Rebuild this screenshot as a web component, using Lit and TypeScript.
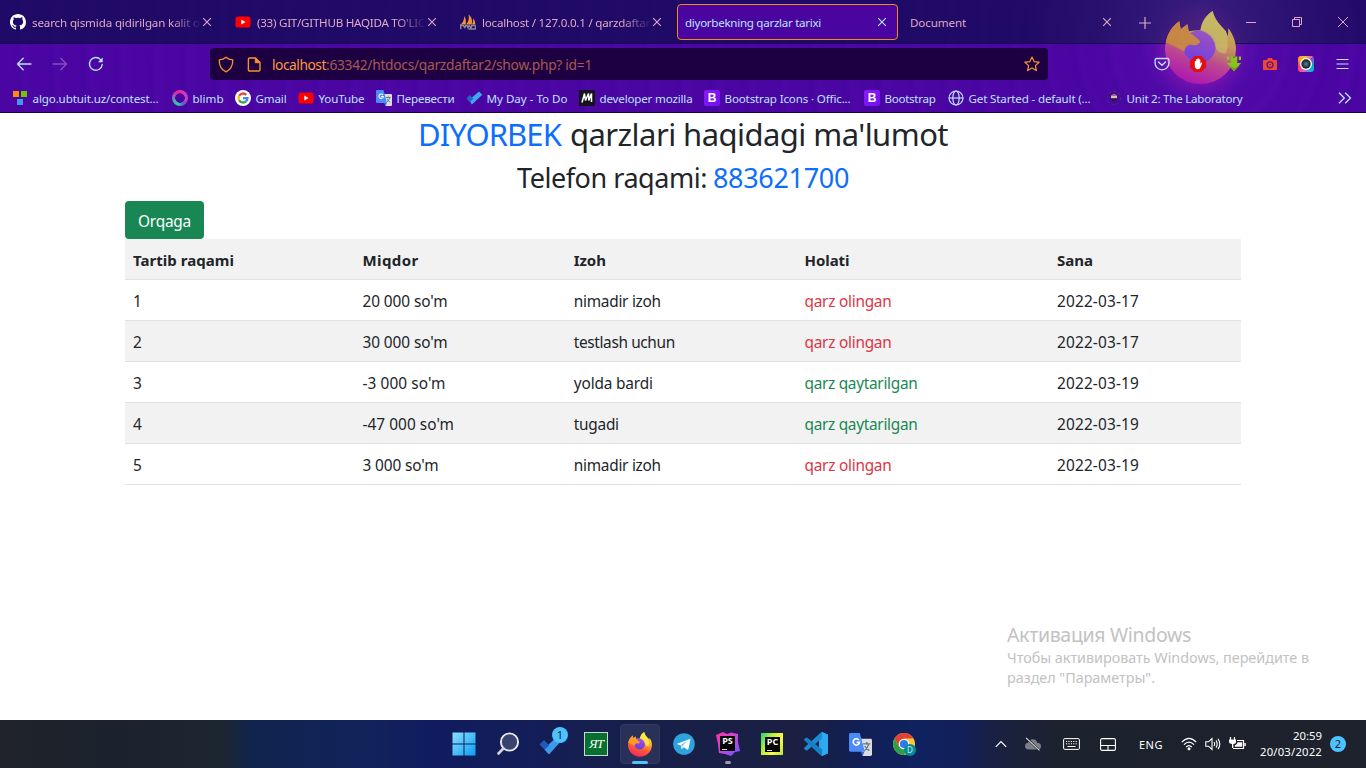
import { LitElement, html, css, svg, nothing } from "lit";
import { customElement, property } from "lit/decorators.js";
import { styleMap } from "lit/directives/style-map.js";

/** A single line of text whose tracking is adjusted so that it fills a given width. */
@customElement("fit-text")
class FitText extends LitElement {
  @property() text = "";
  @property({ type: Number }) w = 0;

  static styles = css`
    :host { display: inline-block; white-space: pre; text-align: left; }
    .line { display: inline-block; }
  `;

  firstUpdated() {
    const line = this.renderRoot.querySelector(".line") as HTMLElement;
    this.style.width = `${this.w}px`;
    const natural = line.getBoundingClientRect().width;
    line.style.letterSpacing = `${(this.w - natural) / this.text.length}px`;
  }

  render() {
    return html`<span class="line">${this.text}</span>`;
  }
}

const t = (text: string, w: number) => html`<fit-text .text=${text} .w=${w}></fit-text>`;

const icon = (w: number, h: number, body: unknown, box = `0 0 ${w} ${h}`) =>
  html`<svg class="icon" width=${w} height=${h} viewBox=${box} fill="none">${body}</svg>`;

const closeIcon = icon(10, 10, svg`<path d="M1.2 1.2l7.6 7.6M8.8 1.2L1.2 8.8" stroke="currentColor" stroke-width="1.1"/>`);

const github = icon(16, 16, svg`<path fill="#fff" d="M8 0C3.58 0 0 3.58 0 8c0 3.54 2.29 6.53 5.47 7.59.4.07.55-.17.55-.38 0-.19-.01-.82-.01-1.49-2.01.37-2.53-.49-2.69-.94-.09-.23-.48-.94-.82-1.13-.28-.15-.68-.52-.01-.53.63-.01 1.08.58 1.23.82.72 1.21 1.87.87 2.33.66.07-.52.28-.87.51-1.07-1.78-.2-3.64-.89-3.64-3.95 0-.87.31-1.59.82-2.15-.08-.2-.36-1.02.08-2.12 0 0 .67-.21 2.2.82.64-.18 1.32-.27 2-.27s1.36.09 2 .27c1.53-1.04 2.2-.82 2.2-.82.44 1.1.16 1.92.08 2.12.51.56.82 1.27.82 2.15 0 3.07-1.87 3.75-3.65 3.95.29.25.54.73.54 1.48 0 1.07-.01 1.93-.01 2.2 0 .21.15.46.55.38A8.01 8.01 0 0 0 16 8c0-4.42-3.58-8-8-8z"/>`);

const youtube = icon(16, 16, svg`<rect x=".5" y="2.4" width="15" height="11.2" rx="2.6" fill="#f00"/><path d="M6.3 5.6v4.8l4.2-2.4z" fill="#fff"/>`);

const phpmyadmin = icon(16, 16, svg`<path d="M1 10.500Q4 7.500 4.600 2Q6.500 6 5.900 10.500zM6.200 10.500Q9.800 6 8.600.2Q13.500 5 11.600 10.500zM11.900 10.500Q13.600 8 13.200 4.200Q15.900 7.500 15.400 10.500z" fill="#f59331"/><path d="M.8 15.2V11l2.600.5 1.400 2 .8-2 1.600.2.800 2 1.200-2.200 2 2.500.4-2.600h3.400l1 3.600H8.500" stroke="#8d8793" stroke-width="1.500"/>`);

const shield = icon(16, 17, svg`<path d="M8 1.2C6.2 2.8 3.6 3.6 1.2 3.8c0 5.2 1.8 10 6.8 12 5-2 6.8-6.8 6.8-12C12.400 3.600 9.800 2.800 8 1.200z" stroke="#f59332" stroke-width="1.3" stroke-linejoin="round"/>`);
const pageIcon = icon(14, 15, svg`<path d="M2.700 1h5.800l4.500 4.500v7.200q0 1.300-1.300 1.300H2.700q-1.300 0-1.300-1.300V2.300Q1.400 1 2.700 1z" stroke="#f59332" stroke-width="1.4"/><path d="M8.300 1v4.700H13z" fill="#f59332" stroke="#f59332"/>`);
const star = icon(16, 16, svg`<path d="M8 1l2.100 4.600 5 .6-3.700 3.400 1 5L8 12.100l-4.400 2.500 1-5L.9 6.200l5-.6z" stroke="#f59332" stroke-width="1.200" stroke-linejoin="round"/>`);

const back = icon(16, 14, svg`<path d="M15 7H1.500M7.200 1.300L1.500 7l5.700 5.700" stroke="#b9e4fb" stroke-width="1.300" stroke-linecap="round" stroke-linejoin="round"/>`);
const forward = icon(16, 14, svg`<path d="M1 7h13.500M8.800 1.300L14.500 7l-5.700 5.700" stroke="#8053c2" stroke-width="1.300" stroke-linecap="round" stroke-linejoin="round"/>`);
const reload = icon(16, 16, svg`<path d="M14.200 8.500A6.400 6.400 0 1 1 12.600 3.600" stroke="#b9e4fb" stroke-width="1.400" stroke-linecap="round"/><path d="M14.700 1.400v4.900H9.800z" fill="#b9e4fb"/>`);

const pocket = icon(16, 16, svg`<path d="M2.600 2.500h10.800q1.500 0 1.500 1.500v3.300a6.900 6.500 0 0 1-13.800 0V4q0-1.500 1.500-1.500z" stroke="#b9e4fb" stroke-width="1.300"/><path d="M4.500 6l3.500 3.300L11.500 6" stroke="#b9e4fb" stroke-width="1.400" stroke-linecap="round" stroke-linejoin="round"/>`);
const blocker = icon(16, 16, svg`<path d="M4.700 0h6.600L16 4.700v6.600L11.300 16H4.700L0 11.300V4.700z" fill="#e30d12"/><path d="M4.800 9.200V5.300q.8-.8 1.300 0V3.400q.8-1 1.400 0V2.800q.8-1 1.400 0v.8q.9-.8 1.400.2v4l1-1.300q1-.3.9.5l-1.600 4.100q-.7 2.200-2.700 2.200-3.100 0-3.100-4.100z" fill="#fff"/>`);
const download = icon(16, 16, svg`<path d="M4.700.5h6.600v6.600h3.900L8 15.300.8 7.100h3.900z" fill="#86c41c"/><path d="M1 .5h2.200v3.500H1zM12.800.5H15V4h-2.200z" fill="#8ccc22"/><path d="M7.300.5h1.400v1.500H7.300z" fill="#437825"/><path d="M3 10L8 15.300 13 10 8 12z" fill="#65a812"/>`);
const camera = icon(14, 14, svg`<path d="M1 3h3l1-2h4l1 2h3q1 0 1 1v8q0 1-1 1H1q-1 0-1-1V4q0-1 1-1z" fill="#ee4a32"/><circle cx="7" cy="7.800" r="3" stroke="#5b1488" stroke-width="1.300"/><circle cx="7" cy="7.800" r=".8" fill="#5b1488"/>`);
const lens = html`<span class="lens">${icon(16, 16, svg`<circle cx="8" cy="8" r="6" fill="#fff"/><circle cx="8" cy="8" r="4.700" fill="#172b3c"/><circle cx="8" cy="8" r="3" fill="#33505f"/><circle cx="8" cy="8" r="1.800" fill="#5a6872"/>`)}</span>`;
const menu = icon(13, 12, svg`<path d="M.5 1.500h12M.5 6h12M.5 10.500h12" stroke="#b9e4fb" stroke-width="1.200"/>`);

const algo = icon(16, 16, svg`<path d="M1 1h6v6H1z" fill="#ff8c00"/><path d="M9 1h6v6H9z" fill="#6fc400"/><path d="M5 9h6v6H5z" fill="#4596f2"/>`);
const blimb = html`<span class="ring"></span>`;
const google = icon(16, 16, svg`<circle cx="8" cy="8" r="8" fill="#fff"/><g stroke-width="2.300"><path d="M4.100 5.800A4.500 4.500 0 0 1 11.300 4.900" stroke="#ea4335"/><path d="M4.100 10.200a4.500 4.500 0 0 1 0-4.400" stroke="#fbbc05"/><path d="M11 11.400a4.500 4.500 0 0 1-6.900-1.200" stroke="#34a853"/><path d="M8 8.100h4.500A4.500 4.500 0 0 1 11 11.400" stroke="#4285f4"/></g>`);
const translate = (s: number) => icon(s, s, svg`<path d="M7 4h8q1 0 1 1v10q0 1-1 1H9.500z" fill="#dadce0"/><path d="M9.800 7.500h5M12.300 6.300v1.200M13.700 7.700q-1 3.200-3 4.600M11 9q1 2 3.200 3.300" stroke="#607988" stroke-width=".9"/><path d="M8 13l2.700 0L9.500 16z" fill="#3367d6"/><path d="M1 0h6.500L11 13H1q-1 0-1-1V1q0-1 1-1z" fill="#4c8bf5"/><path d="M6.900 4.900A2.200 2.200 0 1 0 7.300 6.500H5.300" stroke="#fff" stroke-width="1.100"/>`, "0 0 16 16");
const todo = icon(17, 14, svg`<path d="M5.200 12L2 8.700l3.300-1.600L13 .5 16.300 3.700 6.500 13.100q-.6.500-1.300-.1z" fill="#3fa7f0"/><path d="M.5 7.300L3.800 4l3.500 3.500-3.300 3.400z" fill="#2467c4"/>`);
const mdn = icon(16, 16, svg`<path d="M0 0h16v16H0z" fill="#15141a"/><path d="M3 12.500L5.500 3.500l1 7 3-7 .3 7 2.700-7v8.500" stroke="#fff" stroke-width="1.500" stroke-linejoin="bevel"/>`);
const bootstrap = html`<span class="bs">B</span>`;
const globe = icon(16, 16, svg`<g stroke="#b9e4fb" stroke-width="1.200"><circle cx="8" cy="8" r="7"/><ellipse cx="8" cy="8" rx="3.200" ry="7"/><path d="M1 8h14"/></g>`);
const lab = icon(16, 16, svg`<circle cx="8" cy="8" r="6.600" stroke="#33317a" stroke-width="1.200" stroke-dasharray="3 2"/><path d="M4.500 6q3.500-4.500 7 0l-.5 1H5z" fill="#2b2d33"/><path d="M5 5.500h6v2.700H5z" fill="#d8c29b"/><path d="M6.500 4h3v1.700h-3z" fill="#c25ba0"/><path d="M4.800 8.700h6.400L9.500 11.500h-3z" fill="#251c4a"/>`);

/** The fox curled around its globe, shared by the theme art and the taskbar. */
const fox = (id: string, c: string[]) => svg`
  <defs>
    <linearGradient id=${id + "a"} x1=".75" y1="0" x2=".4" y2="1">
      <stop offset="0" stop-color=${c[0]}/><stop offset=".38" stop-color=${c[1]}/><stop offset=".68" stop-color=${c[2]}/><stop offset="1" stop-color=${c[3]}/>
    </linearGradient>
    <linearGradient id=${id + "b"} x1=".6" y1="0" x2=".3" y2="1"><stop offset="0" stop-color=${c[4]}/><stop offset="1" stop-color=${c[5]}/></linearGradient>
  </defs>
  <path fill="url(#${id}a)" d="M35 19C36 10 41 4 47 0C49 9 54 13 60 20L62 25L62.500 17C67 23 70 30 70 38A35 34 0 0 1 0 38C0 27 5 17 14 10L15.500 18L22 13L23 20Q29 19 35 19z"/>
  <circle cx="34" cy="35" r="16" fill="url(#${id}b)"/>
  <path fill=${c[6]} d="M1 31C2 22 7 15 14 10L15.500 18L22 13L24 21C28 24 33 27 35 31Q30 35 25 33Q20 34 19 40Q13 36 1 31z"/>
  <path fill=${c[0]} d="M35 19C36 10 41 4 47 0C49 9 54 13 60 20Q64 32 60 42Q52 42 50 36Q48 26 41 22Q38 20 35 19z" opacity=".75"/>`;

const themeFox = html`<svg class="theme-fox" width="71" height="73" viewBox="0 0 70 72">${fox("t", ["#cfc764", "#cda552", "#c04a90", "#b418b0", "#a257c8", "#6f43e0", "#d18f42"])}</svg>`;

const tabs = [
  { icon: github, title: "search qismida qidirilgan kalit o", w: 168 },
  { icon: youtube, title: "(33) GIT/GITHUB HAQIDA TO'LIC", w: 168 },
  { icon: phpmyadmin, title: "localhost / 127.0.0.1 / qarzdaftar", w: 168 },
  { icon: nothing, title: "diyorbekning qarzlar tarixi", w: 136, active: true },
  { icon: nothing, title: "Document", w: 56 },
];

const bookmarks: [unknown, string, number, number][] = [
  [algo, "algo.ubtuit.uz/contest...", 126, 160],
  [blimb, "blimb", 31, 63],
  [google, "Gmail", 31, 63],
  [youtube, "YouTube", 46, 78],
  [translate(16), "Перевести", 58, 90],
  [todo, "My Day - To Do", 81, 113],
  [mdn, "developer mozilla", 93, 125],
  [bootstrap, "Bootstrap Icons · Offic...", 126, 160],
  [bootstrap, "Bootstrap", 51, 84],
  [globe, "Get Started - default (...", 122, 158],
  [lab, "Unit 2: The Laboratory", 116, 150],
];

const headings: [string, number][] = [["Tartib raqami", 101], ["Miqdor", 56], ["Izoh", 32], ["Holati", 45], ["Sana", 36]];

const debts = [
  { n: "1", sum: "20 000 so'm", sw: 85, note: "nimadir izoh", nw: 87, paid: false, date: "2022-03-17" },
  { n: "2", sum: "30 000 so'm", sw: 85, note: "testlash uchun", nw: 101, paid: false, date: "2022-03-17" },
  { n: "3", sum: "-3 000 so'm", sw: 83, note: "yolda bardi", nw: 79, paid: true, date: "2022-03-19" },
  { n: "4", sum: "-47 000 so'm", sw: 91.500, note: "tugadi", nw: 45, paid: true, date: "2022-03-19" },
  { n: "5", sum: "3 000 so'm", sw: 76, note: "nimadir izoh", nw: 87, paid: false, date: "2022-03-19" },
];

const windowsLogo = icon(24, 24, svg`<defs><linearGradient id="wg" x1="0" y1="0" x2="1" y2="1"><stop offset="0" stop-color="#8be0ff"/><stop offset="1" stop-color="#0c9df5"/></linearGradient></defs><path fill="url(#wg)" d="M.5.5h11v11H.5zM12.500.5h11v11h-11zM.5 12.500h11v11H.5zM12.500 12.500h11v11h-11z"/>`);
const search = icon(24, 24, svg`<circle cx="13.500" cy="10" r="8.600" fill="#39436d" stroke="#e9e9ee" stroke-width="1.900"/><path d="M7.300 16.500L2.500 21.500" stroke="#d4d4d8" stroke-width="2.600" stroke-linecap="round"/>`);
const bigTodo = html`<span class="badged">${icon(26, 20, svg`<path d="M6 13L10.500 8.500 20 0 24.500 3.500 11.700 17.700q-.8.700-1.600 0z" fill="#3e97e8"/><path d="M1.500 8.500L6 4l5.200 5.200L6.700 13.700z" fill="#1c5bbd"/>`)}<b class="bubble">1</b></span>`;
const greenApp = html`<span class="green"><span>ЯТ</span></span>`;
const firefox = icon(24, 25, fox("f", ["#fff04a", "#ffb52b", "#ff5a35", "#f22b60", "#b04bf0", "#5d40d8", "#ff9a22"]), "0 0 70 73");
const telegram = icon(22, 22, svg`<circle cx="11" cy="11" r="10.800" fill="#2ba3dc"/><path d="M4.200 10.800L16.600 5.900q1-.2.800 1l-2 9.200q-.3 1-1.300.5l-3.300-2.400-1.700 1.600q-.5.300-.7-.4l-.8-3.200-3.200-1q-.9-.3-.2-.8z" fill="#fff"/><path d="M8.200 12.100l5.900-4.200-4.600 4.800-.4 2.300z" fill="#5ab3df"/>`);
const phpstorm = html`<span class="jb">${icon(24, 24, svg`<defs><linearGradient id="psg" x1="0" y1="0" x2="1" y2="1"><stop offset="0" stop-color="#ff2ea1"/><stop offset=".45" stop-color="#d543d8"/><stop offset=".8" stop-color="#8b50f5"/><stop offset="1" stop-color="#b457ff"/></linearGradient></defs><path d="M0 3l7-3 4 2 4-1.500 7 1.500v8l2 9-5 1-4 4-6-2-6-1-1-9z" fill="url(#psg)"/>`)}<b class="jb-text">PS</b></span>`;
const pycharm = html`<span class="jb pc"><b class="jb-text">PC</b></span>`;
const vscode = icon(24, 24, svg`<path d="M18 0l6 2.700v18.600L18 24l-3-2.500V2.500z" fill="#2aa5ee"/><path d="M15 6l-7.500 6 7.500 6z" fill="#111f50"/><path d="M18 0v6.500L3.300 18.300q-.8.500-1.500 0L.5 17q-.7-.8 0-1.500L16.500.7z" fill="#1a8ad2"/><path d="M18 24v-6.500L3.300 5.700q-.8-.5-1.500 0L.5 7q-.7.800 0 1.500L16.500 23.300z" fill="#1580c6"/><path d="M18 0l6 2.700v18.600L18 24z" fill="#2fa8f0"/>`);
const chrome = html`<span class="chrome-app">${icon(22, 22, svg`<circle cx="11" cy="11" r="11" fill="#fcc934"/><path d="M1.500 5.500A11 11 0 0 1 20.500 5.500H11L6.500 14z" fill="#e34133"/><path d="M1.500 5.500A11 11 0 0 0 11 22l4.800-8.200-9.600 0z" fill="#2c9f4b"/><circle cx="11" cy="11" r="5.300" fill="#fff"/><circle cx="11" cy="11" r="4.100" fill="#2f79ea"/>`)}<b class="profile">D</b></span>`;

const apps = [windowsLogo, search, bigTodo, greenApp, firefox, telegram, phpstorm, pycharm, vscode, translate(23), chrome];

@customElement("app-root")
class AppRoot extends LitElement {
  static styles = css`
    :host { display: flex; flex-direction: column; width: 1366px; height: 768px; overflow: hidden; background: #fff; font-family: "Noto Sans", "Open Sans", sans-serif; position: relative; }
    * { box-sizing: border-box; }
    .icon { display: block; flex: none; }

    .browser { flex: none; height: 113px; position: relative; border-bottom: 1px solid #16053e; font-size: 11.6px; color: #b9e4fb;
      background:
        repeating-radial-gradient(circle at 1200px 45px, rgba(125, 40, 230, 0) 0 12px, rgba(115, 30, 210, .09) 20px, rgba(40, 0, 120, .04) 27px, rgba(125, 40, 230, 0) 33px),
        radial-gradient(circle at 1200px 50px, rgba(170, 35, 190, .5) 30px, rgba(110, 30, 190, .18) 50px, rgba(110, 30, 190, 0) 120px),
        #4a05a2; }
    .theme-fox { position: absolute; left: 1165px; top: 11px; opacity: .93; }
    .strip { position: relative; display: flex; height: 44px; border-bottom: 1px solid #190450; background: linear-gradient(90deg, rgba(17, 11, 82, .74) 75%, rgba(38, 39, 96, .6) 88%, rgba(17, 11, 82, .7)); color: #dfa9c4; }
    .tab { flex: none; width: 221px; height: 36px; margin: 4px 2px 0; padding: 0 11px 0 8px; display: flex; align-items: center; border-radius: 4px; }
    .tab .icon { margin-right: 6px; }
    .tab .close { margin: 0 0 0 auto; }
    .tab .close .icon { margin: 0; }
    .tab .title { flex: 1; min-width: 0; display: flex; height: 20px; line-height: 20px; margin-top: 1px; }
    .tab.faded .title { -webkit-mask-image: linear-gradient(90deg, #000 82%, transparent); mask-image: linear-gradient(90deg, #000 82%, transparent); }
    .tab.active { border: 1px solid #f48a1d; background: #4a05a1; color: #b9e4fb; padding: 0 10px 0 7px; }
    .plus { margin: 17px 0 0 14px; }
    .caption { display: flex; gap: 34px; margin: 15px 0 0 94px; align-items: center; height: 14px; }

    .nav { position: relative; display: flex; align-items: center; height: 40px; padding-left: 16px; }
    .nav-buttons { display: flex; width: 194px; gap: 20px; align-items: center; }
    .url { display: flex; align-items: center; width: 838px; height: 32px; padding: 0 8px; border-radius: 4px; background: #1d0042; font-size: 13.800px; color: #a45a50; }
    .url .host { color: #f79b3d; }
    .url .page { margin: 0 11px 0 13px; }
    .url .star { margin-left: auto; }
    .tools { display: flex; margin-left: 96px; }
    .tool { width: 36px; height: 32px; display: flex; align-items: center; justify-content: center; }
    .lens { border-radius: 3px; background: conic-gradient(from 45deg, #a040d0, #00b0b8, #20aee8, #ee55cc, #ff3c50, #ff9a22, #f3c02b, #e05ac0); }

    .bookmarks { position: relative; display: flex; align-items: center; height: 28px; padding-left: 12px; }
    .mark { display: flex; align-items: center; flex: none; gap: 4.500px; }
    .mark-icon { width: 16px; display: flex; justify-content: center; }
    .ring { width: 16px; height: 16px; border-radius: 50%; background: radial-gradient(circle, #4904a1 0 4.500px, transparent 5px), conic-gradient(#e42fb4, #c23fd0 100deg, #6558c4 150deg, #30c5a8 190deg, #37bd9b 230deg, #9060c0 280deg, #f02092 330deg, #e42fb4); }
    .bs { width: 16px; height: 16px; border-radius: 2px; background: linear-gradient(135deg, #8f19fb, #6d10f0); color: #fff; font: 700 12px/16px "Liberation Sans", sans-serif; text-align: center; }
    .more { margin-left: 82px; }

    .page-body { flex: none; height: 607px; padding: 0 125px; color: #212529; font-size: 15.4px; line-height: 24px; }
    h2, h3 { margin: 0 0 8px; font-weight: 400; text-align: center; display: flex; justify-content: center; }
    h2 { font-size: 31px; line-height: 38.400px; height: 38.400px; gap: 9px; padding: 2px 0 0 0; }
    h3 { font-size: 27px; line-height: 33.600px; height: 33.600px; gap: 6px; padding-top: 2px; }
    .blue { color: #0d6efd; }
    .btn { display: flex; align-items: center; width: 79px; height: 38px; padding: 4px 0 0 13px; border: 0; border-radius: 4px; background: #198754; color: #fff; font: inherit; }
    .row { display: grid; grid-template-columns: 229.500px 211.300px 230.700px 252.500px 1fr; height: 41px; padding: 10px 8px 0; border-bottom: 1px solid #dee2e6; }
    .row.odd { background: #f2f2f2; }
    .row.head { padding-top: 9px; font-weight: 700; font-size: 15px; background: #f2f2f2; }
    .red { color: #dc3545; }
    .greenish { color: #198754; }

    .watermark { position: absolute; left: 1007px; top: 622px; color: #c2c2c2; display: flex; flex-direction: column; font-size: 14.400px; line-height: 20px; }
    .watermark .big { font-size: 19.500px; line-height: 26px; }

    .taskbar { flex: none; height: 48px; display: flex; align-items: center; color: #fff; font-size: 11.500px;
      background: linear-gradient(90deg, #20232b 0, #1b222d 120px, #1c2631 225px, #10244e 250px, #11235a 370px, #101c60 430px, #131d58 520px, #17204a 640px, #1b1f42 800px, #111f55 860px, #0f2260 920px, #12205a 960px, #1a2140 1000px, #1c222e 1060px, #1d222c 100%); }
    .apps { display: flex; gap: 4px; margin-left: 444px; }
    .app { width: 40px; height: 40px; display: flex; align-items: center; justify-content: center; position: relative; border-radius: 4px; }
    .app.current { background: rgba(255, 255, 255, .08); box-shadow: inset 0 0 0 1px rgba(255, 255, 255, .04); }
    .app.current::after { content: ""; position: absolute; left: 12px; bottom: 0; width: 16px; height: 3px; border-radius: 2px; background: #4cc2ff; }
    .app.running::after { content: ""; position: absolute; left: 17px; bottom: 0; width: 6px; height: 3px; border-radius: 2px; background: #9a9bab; }
    .badged, .chrome-app, .jb { position: relative; display: block; }
    .badged { margin: 3px 2px 0 0; }
    .bubble { position: absolute; left: 14px; top: -9px; width: 16px; height: 16px; border-radius: 50%; background: #4cc2ff; color: #111c40; font-weight: 400; font-size: 11px; line-height: 16px; text-align: center; }
    .green { width: 24px; height: 24px; border: 1px solid #c9d8d0; background: #08702e; font: italic 13px/22px "Liberation Serif", "DejaVu Serif", serif; text-align: center; letter-spacing: -1px; }
    .jb { width: 24px; height: 24px; }
    .jb-text { position: absolute; left: 4px; top: 4px; width: 15px; height: 15px; background: #050505; font: 700 9px/10px "Open Sans", sans-serif; text-align: center; }
    .jb-text::after { content: ""; position: absolute; left: 2px; bottom: 1px; width: 5px; height: 1.500px; background: #ddd; }
    .pc { width: 22px; height: 22px; background: linear-gradient(120deg, #1fd67c, #b9ee3a 35%, #fcf84a 65%, #b5e838); }
    .profile { position: absolute; left: 11px; top: 11px; width: 12px; height: 12px; border-radius: 50%; background: #078a91; color: #c9e7e9; font-weight: 400; font-size: 8px; line-height: 12px; text-align: center; }
    .tray { display: flex; align-items: center; margin-left: 65px; }
    .tray .slot { display: flex; justify-content: center; flex: none; }
    .s24 { width: 24px; }
    .s38 { width: 38px; }
    .s36 { width: 36px; }
    .s40 { width: 40px; }
    .lang { margin: 2px 14px 0 12px; height: 16px; line-height: 16px; font-size: 11px; }
    .clock { display: flex; flex-direction: column; align-items: flex-end; width: 73px; line-height: 16px; font-size: 11.300px; }
    .notice { margin-left: 8px; width: 16px; height: 16px; border-radius: 50%; background: #4cc2ff; color: #10202c; font-size: 11px; line-height: 16px; text-align: center; }
  `;

  private tab(x: (typeof tabs)[number]) {
    const faded = x.w > 160;
    return html`<div class="tab ${x.active ? "active" : ""} ${faded ? "faded" : ""}">
      ${x.icon}<span class="title">${t(x.title, x.w)}</span><span class="close">${closeIcon}</span>
    </div>`;
  }

  render() {
    return html`
      <header class="browser">
        <div class="strip">
          ${tabs.map((x) => this.tab(x))}
          <span class="plus">${icon(12, 12, svg`<path d="M6 0v12M0 6h12" stroke="#dfa9c4" stroke-width="1.200"/>`)}</span>
          <div class="caption">
            ${icon(12, 12, svg`<path d="M1 6.500h10" stroke="#dfa9c4"/>`)}
            ${icon(12, 12, svg`<path d="M1.500 3.500h7v7h-7zM3.500 3.500v-2h7v7h-2" stroke="#dfa9c4"/>`)}
            ${icon(12, 12, svg`<path d="M1 1l10 10M11 1L1 11" stroke="#dfa9c4"/>`)}
          </div>
        </div>
        ${themeFox}
        <div class="nav">
          <div class="nav-buttons">${back}${forward}${reload}</div>
          <div class="url">
            ${shield}<span class="page">${pageIcon}</span>
            <span class="host">${t("localhost", 54)}</span>${t(":63342/htdocs/qarzdaftar2/show.php? id=1", 266)}
            <span class="star">${star}</span>
          </div>
          <div class="tools">${[pocket, blocker, download, camera, lens, menu].map((x) => html`<span class="tool">${x}</span>`)}</div>
        </div>
        <nav class="bookmarks">
          ${bookmarks.map(([i, label, w, slot]) => html`<span class="mark" style=${styleMap({ width: `${slot}px` })}><span class="mark-icon">${i}</span>${t(label, w)}</span>`)}
          <span class="more">${icon(14, 12, svg`<path d="M1 .8L6.300 6 1 11.200M7.200.8L12.500 6 7.200 11.200" stroke="#b9e4fb" stroke-width="1.300"/>`)}</span>
        </nav>
      </header>

      <main class="page-body">
        <h2><span class="blue">${t("DIYORBEK", 143)}</span>${t("qarzlari haqidagi ma'lumot", 378)}</h2>
        <h3>${t("Telefon raqami:", 190)}<span class="blue">${t("883621700", 136)}</span></h3>
        <button class="btn">${t("Orqaga", 53)}</button>
        <div class="row head">${headings.map(([h, w]) => html`<span>${t(h, w)}</span>`)}</div>
        ${debts.map((d, i) => html`<div class="row ${i % 2 ? "odd" : ""}">
          <span>${d.n}</span><span>${t(d.sum, d.sw)}</span><span>${t(d.note, d.nw)}</span>
          <span class=${d.paid ? "greenish" : "red"}>${d.paid ? t("qarz qaytarilgan", 113) : t("qarz olingan", 87)}</span>
          <span>${t(d.date, 82)}</span>
        </div>`)}
      </main>

      <aside class="watermark">
        <span class="big">${t("Активация Windows", 184)}</span>
        ${t("Чтобы активировать Windows, перейдите в", 302)}
        ${t("раздел \"Параметры\".", 148)}
      </aside>

      <footer class="taskbar">
        <div class="apps">${apps.map((a, i) => html`<span class="app ${i === 4 ? "current" : i === 6 ? "running" : ""}">${a}</span>`)}</div>
        <div class="tray">
          <span class="slot s24">${icon(12, 8, svg`<path d="M.8 6.800L6 1.600l5.200 5.200" stroke="#fff" stroke-width="1.200"/>`)}</span>
          <span class="slot s40">${icon(18, 14, svg`<path d="M5 12.500q-4 0-4-3.500 0-3 3.200-3.200Q5.500 2 9 2.200q3.500.3 4.200 3.500 3.800.3 3.800 3.500 0 3.300-3.500 3.300z" fill="#7c7f86"/><path d="M2.500 1l13 12.500" stroke="#1c222e" stroke-width="2.200"/><path d="M2 .8l13.500 12.500" stroke="#ddd" stroke-width="1.100"/>`)}</span>
          <span class="slot s36">${icon(17, 12, svg`<rect x=".6" y=".6" width="15.800" height="10.800" rx="1.200" stroke="#fff"/><path d="M3 3.500h11M3 5.800h11" stroke="#fff" stroke-dasharray="1.200 1.200"/><path d="M4.500 8.500h8" stroke="#fff"/>`)}</span>
          <span class="slot s38">${icon(16, 13, svg`<rect x=".6" y=".6" width="14.800" height="11.800" rx="1.500" stroke="#fff" stroke-width="1.100"/><path d="M.6 7.500h14.800M8 7.500v5" stroke="#fff" stroke-width="1.100"/>`)}</span>
          <span class="lang">${t("ENG", 24)}</span>
          <span class="slot s24">${icon(16, 14, svg`<g stroke="#fff" stroke-width="1.200"><path d="M.8 5.200q7.200-7.500 14.400 0M3 7.700q5-5 10 0M5.200 10q2.800-2.700 5.600 0"/></g><circle cx="8" cy="11.800" r="1.500" fill="#fff"/>`)}</span>
          <span class="slot s24">${icon(16, 14, svg`<g stroke="#fff" stroke-width="1.100"><path d="M.8 4.800h2.700L7 1.500v11L3.500 9.200H.8z"/><path d="M9 5q1.300 2 0 4M11 3.400q2.400 3.600 0 7.200M13 1.800q3.600 5.200 0 10.400"/></g>`)}</span>
          <span class="slot s24">${icon(17, 14, svg`<path d="M1.500 0v3M5.500 0v3" stroke="#fff" stroke-width="1.200"/><path d="M0 2.500h7v2.300Q7 7 4.300 7v4H3V7Q0 6.800 0 4.800z" fill="#fff"/><path d="M8 3.500h6.500v8H4" stroke="#fff" stroke-width="1.200"/><path d="M8.500 5.200h4.700v4.600H5.800V8.500q2.700-.8 2.700-3.300zM15.300 6h1.500v3h-1.500z" fill="#fff"/>`)}</span>
          <div class="clock">${t("20:59", 29)}${t("20/03/2022", 62)}</div>
          <span class="notice">2</span>
        </div>
      </footer>
    `;
  }
}
